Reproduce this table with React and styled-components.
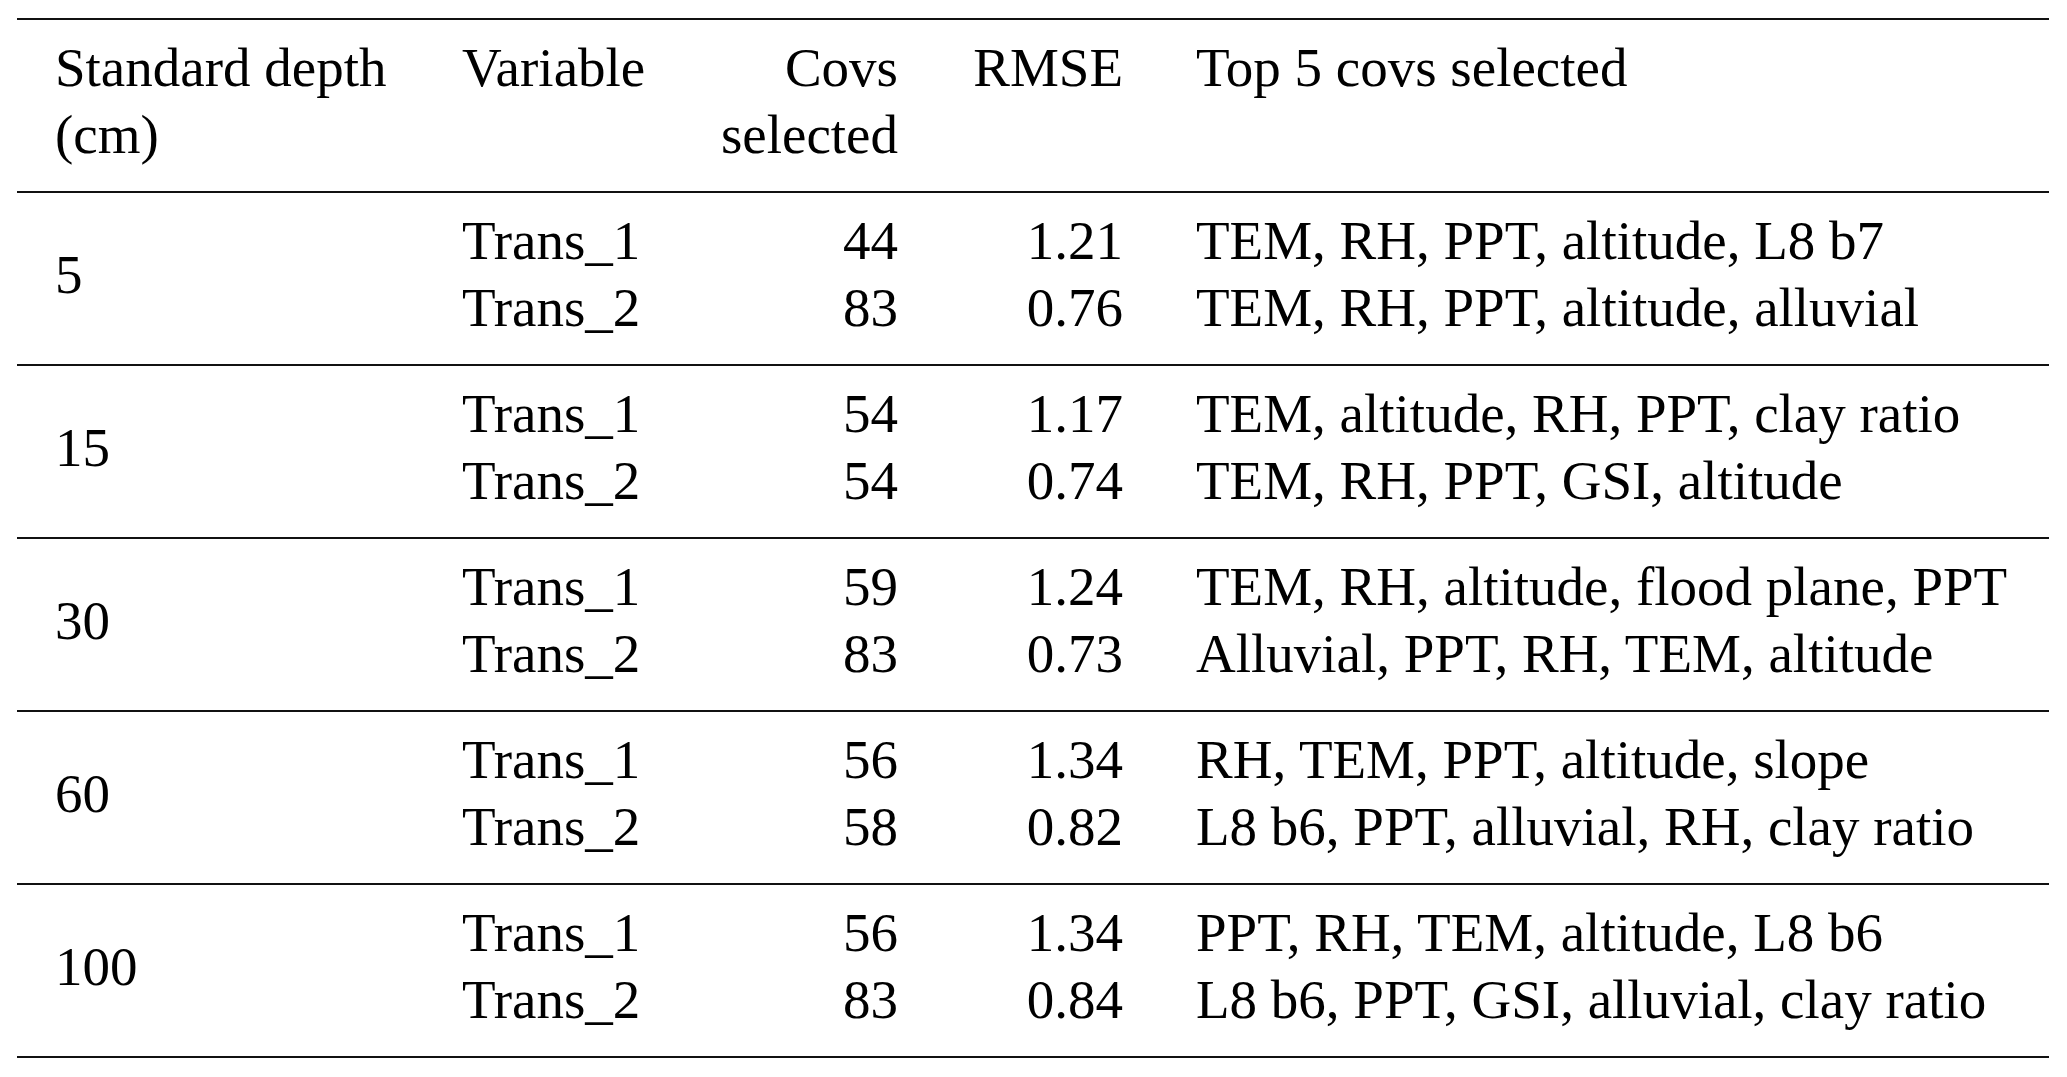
import React from "react";
import styled, { createGlobalStyle } from "styled-components";

const GlobalStyle = createGlobalStyle`
  html, body { margin: 0; padding: 0; background: #ffffff; }
`;

const Table = styled.div`
  margin: 18px 0 0 17px;
  width: 2032px;
  border-top: 2px solid #111;
  font-family: "Liberation Serif", "Times New Roman", serif;
  font-size: 55px;
  line-height: 67px;
  color: #000;
`;

const Row = styled.div`
  display: grid;
  grid-template-columns: 445px 240px 196px 225px 1fr;
  padding: 14px 0 23px;
  border-bottom: 2px solid #111;
`;

const Cell = styled.div`
  text-align: ${(p) => (p.$right ? "right" : "left")};
  align-self: ${(p) => (p.$middle ? "center" : "start")};
  padding-left: ${(p) => p.$indent || 0}px;
  white-space: nowrap;
`;

const Line = styled.div``;

const header = [
  { lines: ["Standard depth", "(cm)"], indent: 38 },
  { lines: ["Variable"] },
  { lines: ["Covs", "selected"], right: true },
  { lines: ["RMSE"], right: true },
  { lines: ["Top 5 covs selected"], indent: 73 },
];

const data = [
  {
    depth: "5",
    rows: [
      ["Trans_1", "44", "1.21", "TEM, RH, PPT, altitude, L8 b7"],
      ["Trans_2", "83", "0.76", "TEM, RH, PPT, altitude, alluvial"],
    ],
  },
  {
    depth: "15",
    rows: [
      ["Trans_1", "54", "1.17", "TEM, altitude, RH, PPT, clay ratio"],
      ["Trans_2", "54", "0.74", "TEM, RH, PPT, GSI, altitude"],
    ],
  },
  {
    depth: "30",
    rows: [
      ["Trans_1", "59", "1.24", "TEM, RH, altitude, flood plane, PPT"],
      ["Trans_2", "83", "0.73", "Alluvial, PPT, RH, TEM, altitude"],
    ],
  },
  {
    depth: "60",
    rows: [
      ["Trans_1", "56", "1.34", "RH, TEM, PPT, altitude, slope"],
      ["Trans_2", "58", "0.82", "L8 b6, PPT, alluvial, RH, clay ratio"],
    ],
  },
  {
    depth: "100",
    rows: [
      ["Trans_1", "56", "1.34", "PPT, RH, TEM, altitude, L8 b6"],
      ["Trans_2", "83", "0.84", "L8 b6, PPT, GSI, alluvial, clay ratio"],
    ],
  },
];

export default function App() {
  return (
    <>
      <GlobalStyle />
      <Table>
        <Row>
          {header.map((h, i) => (
            <Cell key={i} $right={h.right} $indent={h.indent}>
              {h.lines.map((l) => (
                <Line key={l}>{l}</Line>
              ))}
            </Cell>
          ))}
        </Row>
        {data.map((g) => (
          <Row key={g.depth}>
            <Cell $middle $indent={38}>
              {g.depth}
            </Cell>
            <Cell>
              {g.rows.map((r) => (
                <Line key={r[0]}>{r[0]}</Line>
              ))}
            </Cell>
            <Cell $right>
              {g.rows.map((r) => (
                <Line key={r[0]}>{r[1]}</Line>
              ))}
            </Cell>
            <Cell $right>
              {g.rows.map((r) => (
                <Line key={r[0]}>{r[2]}</Line>
              ))}
            </Cell>
            <Cell $indent={73}>
              {g.rows.map((r) => (
                <Line key={r[0]}>{r[3]}</Line>
              ))}
            </Cell>
          </Row>
        ))}
      </Table>
    </>
  );
}
